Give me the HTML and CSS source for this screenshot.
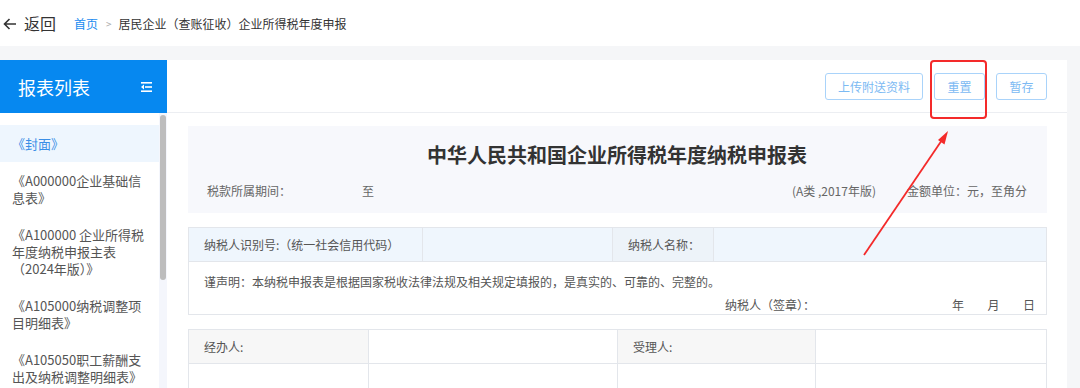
FILE: index.html
```html
<!DOCTYPE html>
<html lang="zh-CN">
<head>
  <meta charset="UTF-8">
  <meta name="viewport" content="width=device-width, initial-scale=1.0">
  <title>企业所得税年度申报</title>
  <link rel="stylesheet" href="styles.css">
</head>
<body>

<div class="topbar">
  <svg class="back-icon" width="14" height="12" viewBox="0 0 14 12">
    <path d="M13 6H1.5M6.5 1L1.5 6l5 5" fill="none" stroke="#333" stroke-width="1.6"/>
  </svg>
  <span class="back-text">返回</span>
  <div class="crumbs">
    <span class="crumb-home">首页</span>
    <span class="crumb-sep">&gt;</span>
    <span>居民企业（查账征收）企业所得税年度申报</span>
  </div>
</div>

<div class="layout">
  <div class="sidebar">
    <div class="sidebar-head">
      <span>报表列表</span>
      <svg width="11" height="10" viewBox="0 0 11 10">
        <rect x="0" y="0" width="11" height="1.6" fill="#fff"/>
        <rect x="4" y="4.2" width="7" height="1.6" fill="#fff"/>
        <rect x="0" y="8.4" width="11" height="1.6" fill="#fff"/>
        <path d="M0 5l3-2.4v4.8z" fill="#fff"/>
      </svg>
    </div>
    <div class="sidebar-body">
      <ul class="report-list">
        <li class="active">《封面》</li>
        <li>《A000000企业基础信息表》</li>
        <li>《A100000 企业所得税年度纳税申报主表（2024年版）》</li>
        <li>《A105000纳税调整项目明细表》</li>
        <li>《A105050职工薪酬支出及纳税调整明细表》</li>
      </ul>
      <div class="scroll-track"><div class="scroll-thumb"></div></div>
    </div>
  </div>

  <div class="main">
    <div class="toolbar">
      <button class="btn">上传附送资料</button>
      <button class="btn btn-short">重置</button>
      <button class="btn btn-short">暂存</button>
    </div>

    <div class="form-wrap">
      <div class="form-head">
        <h1>中华人民共和国企业所得税年度纳税申报表</h1>
        <div class="form-meta">
          <span class="period-label">税款所属期间：</span>
          <span>至</span>
          <span class="meta-type">(A类 ,2017年版)</span>
          <span class="meta-unit">金额单位：元，至角分</span>
        </div>
      </div>

      <table class="grid grid-taxpayer">
        <tr class="row-blue">
          <td class="w1">纳税人识别号:（统一社会信用代码）</td>
          <td class="w2"></td>
          <td class="w3 cell-label">纳税人名称：</td>
          <td></td>
        </tr>
        <tr>
          <td colspan="4" class="statement">
            <div>谨声明：本纳税申报表是根据国家税收法律法规及相关规定填报的，是真实的、可靠的、完整的。</div>
            <div class="sign-line">
              <span class="sign-label">纳税人（签章）：</span>
              <span class="sign-date">年</span>
              <span class="sign-date">月</span>
              <span class="sign-date">日</span>
            </div>
          </td>
        </tr>
      </table>

      <table class="grid grid-agent">
        <tr>
          <td class="a1 cell-gray">经办人:</td>
          <td class="a2"></td>
          <td class="a3 cell-gray">受理人:</td>
          <td></td>
        </tr>
        <tr>
          <td></td>
          <td></td>
          <td></td>
          <td></td>
        </tr>
      </table>
    </div>
  </div>
</div>

<!-- annotation over the screenshot -->
<svg class="annotation" width="1080" height="388" viewBox="0 0 1080 388">
  <rect x="931" y="61" width="55" height="57" rx="3" fill="none" stroke="#f42a2a" stroke-width="2"/>
  <line x1="864" y1="255" x2="942" y2="140" stroke="#f42a2a" stroke-width="1.8"/>
  <path d="M948 131l-3.5 13.5-6.5-4.4z" fill="#f42a2a"/>
</svg>

</body>
</html>
```

FILE: styles.css
```css
* {
  box-sizing: border-box;
}
body {
  margin: 0;
  font-family: "Noto Sans CJK SC", "Noto Sans", sans-serif;
  color: #333;
  background-color: #fff;
  width: 1080px;
  height: 388px;
  overflow: hidden;
  position: relative;
}
.topbar {
  height: 46px;
  display: flex;
  align-items: center;
  padding-left: 3px;
}
.back-icon {
  margin-top: 1px;
}
.back-text {
  font-size: 16px;
  margin-left: 7px;
  color: #333;
}
.crumbs {
  margin-left: 18px;
  font-size: 12px;
  display: flex;
  align-items: center;
  color: #333;
}
.crumb-home {
  color: #1a8cf0;
}
.crumb-sep {
  color: #aaa;
  font-size: 10px;
  margin: 0 7px 0 8px;
}
.layout {
  display: flex;
  background-color: #f5f6f8;
  padding: 14px 13px 0 0;
  height: 342px;
}
.sidebar {
  width: 167px;
  background-color: #fff;
  display: flex;
  flex-direction: column;
}
.sidebar-head {
  height: 53px;
  background-color: #0688f0;
  color: #fff;
  font-size: 18px;
  display: flex;
  align-items: center;
  justify-content: space-between;
  padding: 0 15px 0 18px;
}
.sidebar-body {
  flex: 1;
  display: flex;
  overflow: hidden;
}
.report-list {
  list-style: none;
  margin: 0;
  padding: 12px 0 0 0;
  flex: 1;
}
.report-list li {
  font-size: 13px;
  line-height: 17px;
  padding: 10px 14px 10px 12px;
  color: #555;
}
.report-list li.active {
  background-color: #eef6fe;
  color: #3a8ee6;
}
.scroll-track {
  width: 8px;
  background-color: #f4f6fc;
  padding: 2px 1px 0 1px;
}
.scroll-thumb {
  height: 165px;
  background-color: #bdbdbd;
  border-radius: 3px;
}
.main {
  flex: 1;
  background-color: #fff;
}
.toolbar {
  height: 53px;
  border-bottom: 1px solid #eceef2;
  display: flex;
  justify-content: flex-end;
  align-items: center;
  gap: 11px;
  padding-right: 20px;
}
.btn {
  font-family: inherit;
  font-size: 12px;
  color: #7cbaf3;
  background-color: #fff;
  border: 1px solid #a9d3fa;
  border-radius: 3px;
  height: 27px;
  width: 98px;
  padding: 0;
  margin-top: 1px;
}
.btn-short {
  width: 51px;
}
.form-wrap {
  padding: 13px 20px 0 21px;
}
.form-head {
  background-color: #f7f8fc;
  padding: 16px 20px 13px 19px;
}
.form-head h1 {
  margin: 0;
  font-size: 20px;
  line-height: 26px;
  font-weight: bold;
  text-align: center;
  color: #333;
}
.form-meta {
  display: flex;
  font-size: 12px;
  line-height: 18px;
  color: #666;
  margin-top: 14px;
}
.period-label {
  width: 155px;
}
.meta-type {
  margin-left: auto;
}
.meta-unit {
  margin-left: 31px;
}
.grid {
  width: 100%;
  border-collapse: collapse;
  table-layout: fixed;
  font-size: 12px;
  color: #555;
}
.grid td {
  border: 1px solid #e3e6eb;
  padding: 0 0 0 15px;
  height: 34px;
}
.grid-taxpayer {
  margin-top: 14px;
}
.row-blue td {
  background-color: #eff6fd;
}
.row-blue td.cell-label {
  background-color: #edf3f9;
}
.w1 {
  width: 234px;
}
.w2 {
  width: 190px;
}
.w3 {
  width: 101px;
}
.statement {
  height: 66px;
  vertical-align: top;
  padding-top: 11px !important;
  line-height: 18px;
}
.sign-line {
  display: flex;
  margin-top: 5px;
}
.sign-line span {
  flex-shrink: 0;
}
.sign-label {
  margin-left: 521px;
  width: 227px;
}
.sign-date {
  width: 35.5px;
}
.grid-agent {
  margin-top: 14px;
}
.a1 {
  width: 180px;
}
.a2 {
  width: 249px;
}
.a3 {
  width: 198px;
}
.cell-gray {
  background-color: #f7f7f7;
}
.annotation {
  position: absolute;
  left: 0;
  top: 0;
  pointer-events: none;
}
```
